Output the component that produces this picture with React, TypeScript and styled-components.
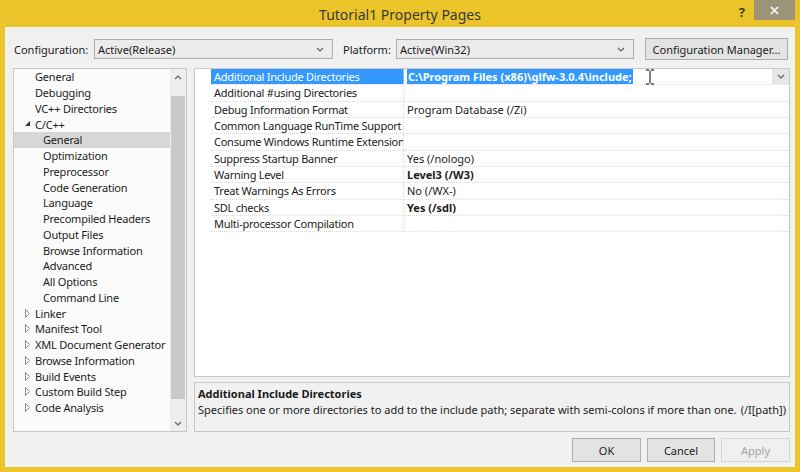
import React from 'react'
import styled, { createGlobalStyle } from 'styled-components'

const GlobalStyle = createGlobalStyle`
  html, body {
    margin: 0;
    padding: 0;
    background: #3c3c3c;
  }
  * {
    box-sizing: border-box;
  }
`

const Window = styled.div`
  width: 800px;
  height: 472px;
  display: flex;
  flex-direction: column;
  background: #ebc42a;
  padding: 0 5px 5px 5px;
  font-family: 'Noto Sans', 'Segoe UI', sans-serif;
  font-size: 11px;
  color: #1b1b1b;
`

const TitleBar = styled.div`
  height: 27px;
  display: grid;
  grid-template-columns: 1fr auto 1fr;
`

const Title = styled.div`
  grid-column: 2;
  align-self: center;
  font-size: 14px;
  color: #3a3a3a;
  padding-top: 1px;
`

const Caption = styled.div`
  grid-column: 3;
  display: flex;
  justify-content: flex-end;
  align-items: flex-start;
`

const HelpGlyph = styled.span`
  font-size: 13px;
  font-weight: 700;
  color: #3a3a3a;
  margin: 3px 9px 0 0;
`

const CloseButton = styled.div`
  width: 41px;
  height: 20px;
  background: #9b9479;
  display: flex;
  align-items: center;
  justify-content: center;
`

const Body = styled.div`
  flex: 1;
  display: flex;
  flex-direction: column;
  background: #f1f1f1;
  padding: 11px 5px 5px 8px;
`

const ConfigRow = styled.div`
  height: 22px;
  display: flex;
  align-items: center;
  padding-left: 1px;
`

const Label = styled.span<{ $width: number; $gap?: number }>`
  width: ${p => p.$width}px;
  margin-left: ${p => p.$gap ?? 0}px;
`

const Combo = styled.div<{ $width: number }>`
  width: ${p => p.$width}px;
  height: 20px;
  border: 1px solid #acacac;
  background: #ebebeb;
  display: flex;
  align-items: center;
  justify-content: space-between;
  padding: 0 8px 0 3px;
`

const Button = styled.div<{ $width: number; $disabled?: boolean }>`
  width: ${p => p.$width}px;
  height: 100%;
  border: 1px solid ${p => (p.$disabled ? '#d4d4d4' : '#adadad')};
  background: ${p => (p.$disabled ? '#f0f0f0' : '#e3e3e3')};
  color: ${p => (p.$disabled ? '#a2a2a2' : '#1b1b1b')};
  display: flex;
  align-items: center;
  justify-content: center;
`

const ManagerButton = styled(Button)`
  height: 22px;
  margin-left: 11px;
`

const Main = styled.div`
  height: 364px;
  margin-top: 8px;
  display: flex;
  gap: 7px;
`

const Tree = styled.div`
  width: 174px;
  border: 1px solid #c8c8c8;
  background: #fbfbfb;
  display: flex;
`

const TreeList = styled.div`
  flex: 1;
  display: flex;
  flex-direction: column;
  overflow: hidden;
`

const TreeItem = styled.div<{ $level: number; $selected?: boolean }>`
  height: 15.75px;
  display: flex;
  align-items: center;
  padding-left: ${p => (p.$level === 1 ? 11 : 29)}px;
  background: ${p => (p.$selected ? '#d7d7d7' : 'transparent')};
  white-space: nowrap;
  letter-spacing: -0.2px;
`

const Arrow = styled.span`
  width: 10px;
  display: flex;
  align-items: center;
`

const ScrollBar = styled.div`
  width: 16px;
  background: #eeeeee;
  display: flex;
  flex-direction: column;
  align-items: center;
`

const ScrollArrow = styled.div`
  height: 16px;
  width: 100%;
  display: flex;
  align-items: center;
  justify-content: center;
`

const ScrollTrack = styled.div`
  flex: 1;
  width: 100%;
  display: flex;
  flex-direction: column;
  padding: 11px 1px 0 1px;
`

const Thumb = styled.div`
  height: 303px;
  background: #c9c9c9;
`

const Right = styled.div`
  flex: 1;
  display: flex;
  flex-direction: column;
  gap: 5px;
`

const Grid = styled.div`
  flex: 1;
  border: 1px solid #c8c8c8;
  background: #ffffff;
  padding-left: 16px;
`

const GridRow = styled.div`
  height: 16.33px;
  display: flex;
  border-bottom: 1px dotted #dcdcdc;
`

const NameCell = styled.div<{ $active?: boolean }>`
  width: 193px;
  flex-shrink: 0;
  padding-left: 3px;
  display: flex;
  align-items: center;
  overflow: hidden;
  white-space: nowrap;
  letter-spacing: -0.25px;
  border-right: 1px dotted #dcdcdc;
  background: ${p => (p.$active ? '#3399ff' : 'transparent')};
  color: ${p => (p.$active ? '#ffffff' : 'inherit')};
`

const ValueCell = styled.div<{ $bold?: boolean }>`
  flex: 1;
  display: flex;
  align-items: center;
  padding-left: 3px;
  font-weight: ${p => (p.$bold ? 700 : 400)};
  white-space: nowrap;
`

const SelectedText = styled.span`
  background: #3399ff;
  color: #ffffff;
  font-weight: 700;
  padding: 0 1px;
  line-height: 15px;
`

const Cursor = styled.span`
  margin-left: 12px;
  display: flex;
`

const DropButton = styled.div`
  margin-left: auto;
  width: 17px;
  height: 100%;
  background: #e6e6e6;
  display: flex;
  align-items: center;
  justify-content: center;
`

const Description = styled.div`
  height: 50px;
  border: 1px solid #c8c8c8;
  padding: 3px 3px 0 3px;
  display: flex;
  flex-direction: column;
`

const DescTitle = styled.div`
  font-weight: 700;
  line-height: 16px;
`

const DescText = styled.div`
  display: flex;
  justify-content: space-between;
  line-height: 16px;
`

const Footer = styled.div`
  height: 24px;
  margin-top: 6px;
  display: flex;
  justify-content: flex-end;
  gap: 6px;
`

const Chevron = ({ up }: { up?: boolean }) => (
  <svg width="8" height="5" viewBox="0 0 8 5">
    <path
      d={up ? 'M1 4 L4 1 L7 4' : 'M1 1 L4 4 L7 1'}
      fill="none"
      stroke="#606060"
      strokeWidth="1.2"
    />
  </svg>
)

const Expanded = () => (
  <svg width="6" height="6" viewBox="0 0 6 6">
    <path d="M5 0 L5 5 L0 5 Z" fill="#333" />
  </svg>
)

const Collapsed = () => (
  <svg width="5" height="9" viewBox="0 0 5 9">
    <path d="M0.5 0.5 L4.5 4.5 L0.5 8.5 Z" fill="none" stroke="#8a8a8a" />
  </svg>
)

const IBeam = () => (
  <svg width="10" height="16" viewBox="0 0 10 16">
    <path d="M1 1 H4 M6 1 H9 M5 1.5 V14.5 M1 15 H4 M6 15 H9" stroke="#4a4a4a" strokeWidth="1.4" fill="none" />
  </svg>
)

type Node = { label: string; level: 1 | 2; arrow?: 'open' | 'closed'; selected?: boolean }

const tree: Node[] = [
  { label: 'General', level: 1 },
  { label: 'Debugging', level: 1 },
  { label: 'VC++ Directories', level: 1 },
  { label: 'C/C++', level: 1, arrow: 'open' },
  { label: 'General', level: 2, selected: true },
  { label: 'Optimization', level: 2 },
  { label: 'Preprocessor', level: 2 },
  { label: 'Code Generation', level: 2 },
  { label: 'Language', level: 2 },
  { label: 'Precompiled Headers', level: 2 },
  { label: 'Output Files', level: 2 },
  { label: 'Browse Information', level: 2 },
  { label: 'Advanced', level: 2 },
  { label: 'All Options', level: 2 },
  { label: 'Command Line', level: 2 },
  { label: 'Linker', level: 1, arrow: 'closed' },
  { label: 'Manifest Tool', level: 1, arrow: 'closed' },
  { label: 'XML Document Generator', level: 1, arrow: 'closed' },
  { label: 'Browse Information', level: 1, arrow: 'closed' },
  { label: 'Build Events', level: 1, arrow: 'closed' },
  { label: 'Custom Build Step', level: 1, arrow: 'closed' },
  { label: 'Code Analysis', level: 1, arrow: 'closed' }
]

const props: { name: string; value?: string; bold?: boolean }[] = [
  { name: 'Additional #using Directories' },
  { name: 'Debug Information Format', value: 'Program Database (/Zi)' },
  { name: 'Common Language RunTime Support' },
  { name: 'Consume Windows Runtime Extension' },
  { name: 'Suppress Startup Banner', value: 'Yes (/nologo)' },
  { name: 'Warning Level', value: 'Level3 (/W3)', bold: true },
  { name: 'Treat Warnings As Errors', value: 'No (/WX-)' },
  { name: 'SDL checks', value: 'Yes (/sdl)', bold: true },
  { name: 'Multi-processor Compilation' }
]

export default function App() {
  return (
    <>
      <GlobalStyle />
      <Window>
        <TitleBar>
          <Title>Tutorial1 Property Pages</Title>
          <Caption>
            <HelpGlyph>?</HelpGlyph>
            <CloseButton>
              <svg width="9" height="9" viewBox="0 0 9 9">
                <path d="M1 1 L8 8 M8 1 L1 8" stroke="#ffffff" strokeWidth="1.6" />
              </svg>
            </CloseButton>
          </Caption>
        </TitleBar>
        <Body>
          <ConfigRow>
            <Label $width={80}>Configuration:</Label>
            <Combo $width={239}>
              <span>Active(Release)</span>
              <Chevron />
            </Combo>
            <Label $width={53} $gap={10}>Platform:</Label>
            <Combo $width={238}>
              <span>Active(Win32)</span>
              <Chevron />
            </Combo>
            <ManagerButton $width={143}>Configuration Manager...</ManagerButton>
          </ConfigRow>
          <Main>
            <Tree>
              <TreeList>
                {tree.map((n, i) => (
                  <TreeItem key={i} $level={n.level} $selected={n.selected}>
                    {n.level === 1 && (
                      <Arrow>
                        {n.arrow === 'open' && <Expanded />}
                        {n.arrow === 'closed' && <Collapsed />}
                      </Arrow>
                    )}
                    {n.label}
                  </TreeItem>
                ))}
              </TreeList>
              <ScrollBar>
                <ScrollArrow>
                  <Chevron up />
                </ScrollArrow>
                <ScrollTrack>
                  <Thumb />
                </ScrollTrack>
                <ScrollArrow>
                  <Chevron />
                </ScrollArrow>
              </ScrollBar>
            </Tree>
            <Right>
              <Grid>
                <GridRow>
                  <NameCell $active>Additional Include Directories</NameCell>
                  <ValueCell>
                    <SelectedText>C:\Program Files (x86)\glfw-3.0.4\include;</SelectedText>
                    <Cursor>
                      <IBeam />
                    </Cursor>
                    <DropButton>
                      <Chevron />
                    </DropButton>
                  </ValueCell>
                </GridRow>
                {props.map(p => (
                  <GridRow key={p.name}>
                    <NameCell>{p.name}</NameCell>
                    <ValueCell $bold={p.bold}>{p.value}</ValueCell>
                  </GridRow>
                ))}
              </Grid>
              <Description>
                <DescTitle>Additional Include Directories</DescTitle>
                <DescText>
                  <span>
                    Specifies one or more directories to add to the include path; separate with semi-colons if more than one.
                  </span>
                  <span>(/I[path])</span>
                </DescText>
              </Description>
            </Right>
          </Main>
          <Footer>
            <Button $width={69}>OK</Button>
            <Button $width={68}>Cancel</Button>
            <Button $width={69} $disabled>Apply</Button>
          </Footer>
        </Body>
      </Window>
    </>
  )
}
